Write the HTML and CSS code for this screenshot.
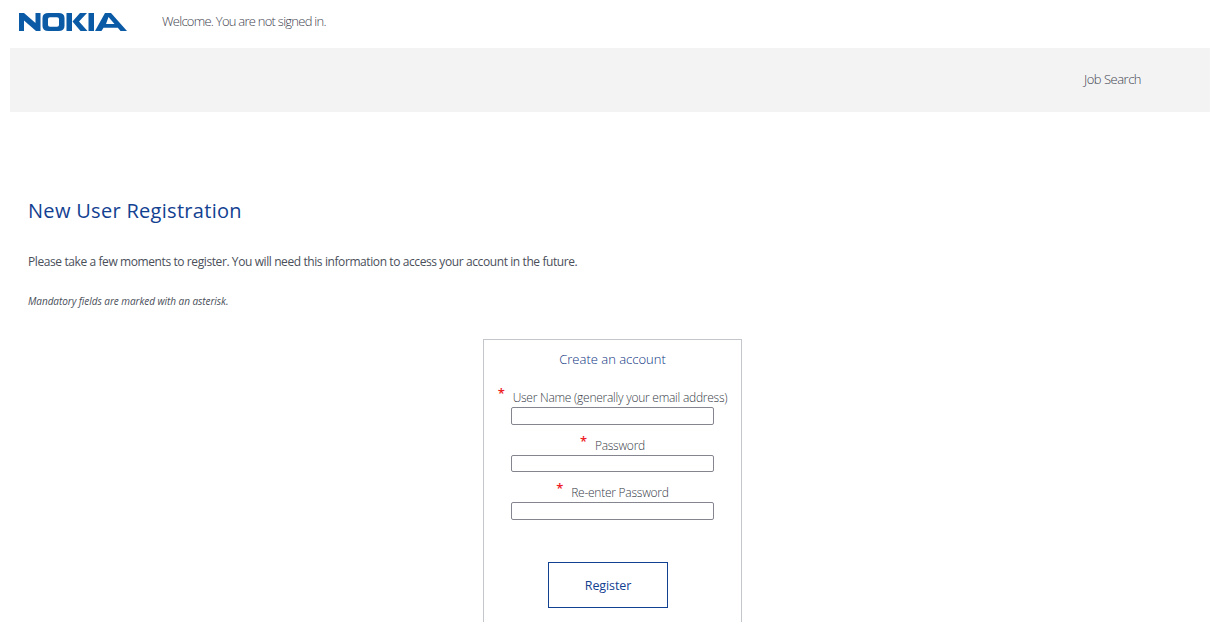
FILE: index.html
```html
<!DOCTYPE html>
<html lang="en">
<head>
<meta charset="utf-8">
<title>New User Registration</title>
<link rel="stylesheet" href="styles.css">
</head>
<body>
<header class="top">
  <svg class="logo" width="108" height="18" viewBox="0 0 108 18" role="img" aria-label="Nokia logo">
    <path fill="#0a5aa5" fill-rule="evenodd" d="M0 18V0h5l11.500 10V0H21.500v18h-4.500L5 7.500V18zM23.500 5q0-5 6-5h10q6 0 6 5v8q0 5-6 5h-10q-6 0-6-5zM29 6v6q0 1.800 2 1.800h7q2 0 2-1.800V6q0-1.800-2-1.800h-7q-2 0-2 1.800zM47.500 0h5.500v18h-5.500zM53.500 8.500 61 0h7l-8 8.500L68.500 18h-7zM69.500 0H75v18h-5.500zM76 18 86 0h6l16 18h-6.500l-2.700-3.200H84.500L82.500 18zM87 11h8.500L89.500 4z"/>
  </svg>
  <p class="welcome">Welcome. You are not signed in.</p>
</header>
<nav class="nav"><a class="nav-link" href="#">Job Search</a></nav>
<main class="main">
  <h1 class="title">New User Registration</h1>
  <p class="intro">Please take a few moments to register. You will need this information to access your account in the future.</p>
  <p class="note">Mandatory fields are marked with an asterisk.</p>
  <form class="card">
    <h2 class="card-title">Create an account</h2>
    <div class="field">
      <label class="label" for="u"><span class="star">*</span>User Name (generally your email address)</label>
      <input class="input" id="u" type="text">
    </div>
    <div class="field">
      <label class="label" for="p"><span class="star">*</span>Password</label>
      <input class="input" id="p" type="password">
    </div>
    <div class="field">
      <label class="label" for="r"><span class="star">*</span>Re-enter Password</label>
      <input class="input" id="r" type="password">
    </div>
    <button class="btn" type="button">Register</button>
  </form>
</main>
</body>
</html>
```
FILE: styles.css
```css
* { box-sizing: border-box; }
html, body { height: 622px; overflow: hidden; }
body {
  margin: 0;
  padding-left: 10px;
  background: #fff;
  font-family: "Open Sans", "Liberation Sans", sans-serif;
  color: #3f4450;
  font-size: 13px;
}
.top { display: flex; align-items: flex-start; height: 48px; }
.logo { margin: 13px 0 0 9px; flex: none; }
.welcome { margin: 12px 0 0 35px; line-height: 18px; font-size: 13px; letter-spacing: -.75px; font-weight: 300; }
.nav { height: 64px; background: #f3f3f3; display: flex; justify-content: flex-end; padding: 22px 69px 0 0; }
.nav-link { color: #3f4450; text-decoration: none; line-height: 18px; font-size: 13px; letter-spacing: -.5px; font-weight: 300; }
.main { padding: 0 0 0 18px; }
.title { margin: 86px 0 0; font-size: 20px; line-height: 26px; font-weight: 400; color: #124191; letter-spacing: .3px; }
.intro { margin: 29px 0 0; font-size: 12px; line-height: 18px; letter-spacing: -.405px; color: #4a4f5a; }
.note { margin: 24px 0 0; font-size: 10px; line-height: 12px; font-style: italic; letter-spacing: -.05px; color: #4a4f5a; }
.card {
  width: 259px; height: 300px; margin: 32px 0 0 455px;
  border: 1px solid #c3c7cc;
  display: flex; flex-direction: column; align-items: center;
}
.card-title { margin: 10px 0 0; font-size: 13px; line-height: 18px; font-weight: 300; letter-spacing: 0; color: #0c3380; }
.field { display: flex; flex-direction: column; align-items: center; margin-top: 20px; width: 100%; }
.field + .field { margin-top: 11px; }
.label { display: block; height: 19px; line-height: 18px; font-size: 12px; letter-spacing: -.25px; font-weight: 300; white-space: nowrap; color: #363b46; }
.star { color: #ee1c25; font-size: 13px; font-weight: 600; margin-right: 8px; position: relative; top: -4px; }
.input { display: block; width: 203px; height: 17.600px; border: 1px solid #85858f; border-radius: 2px; background: #fff; padding: 0; }
.btn {
  width: 120px; height: 46px; margin: 42.200px 9px 0 0; padding-top: 2px;
  background: #fff; border: 1px solid #124191; color: #124191;
  font: 400 12.500px "Open Sans", sans-serif; letter-spacing: -.1px;
}
```
